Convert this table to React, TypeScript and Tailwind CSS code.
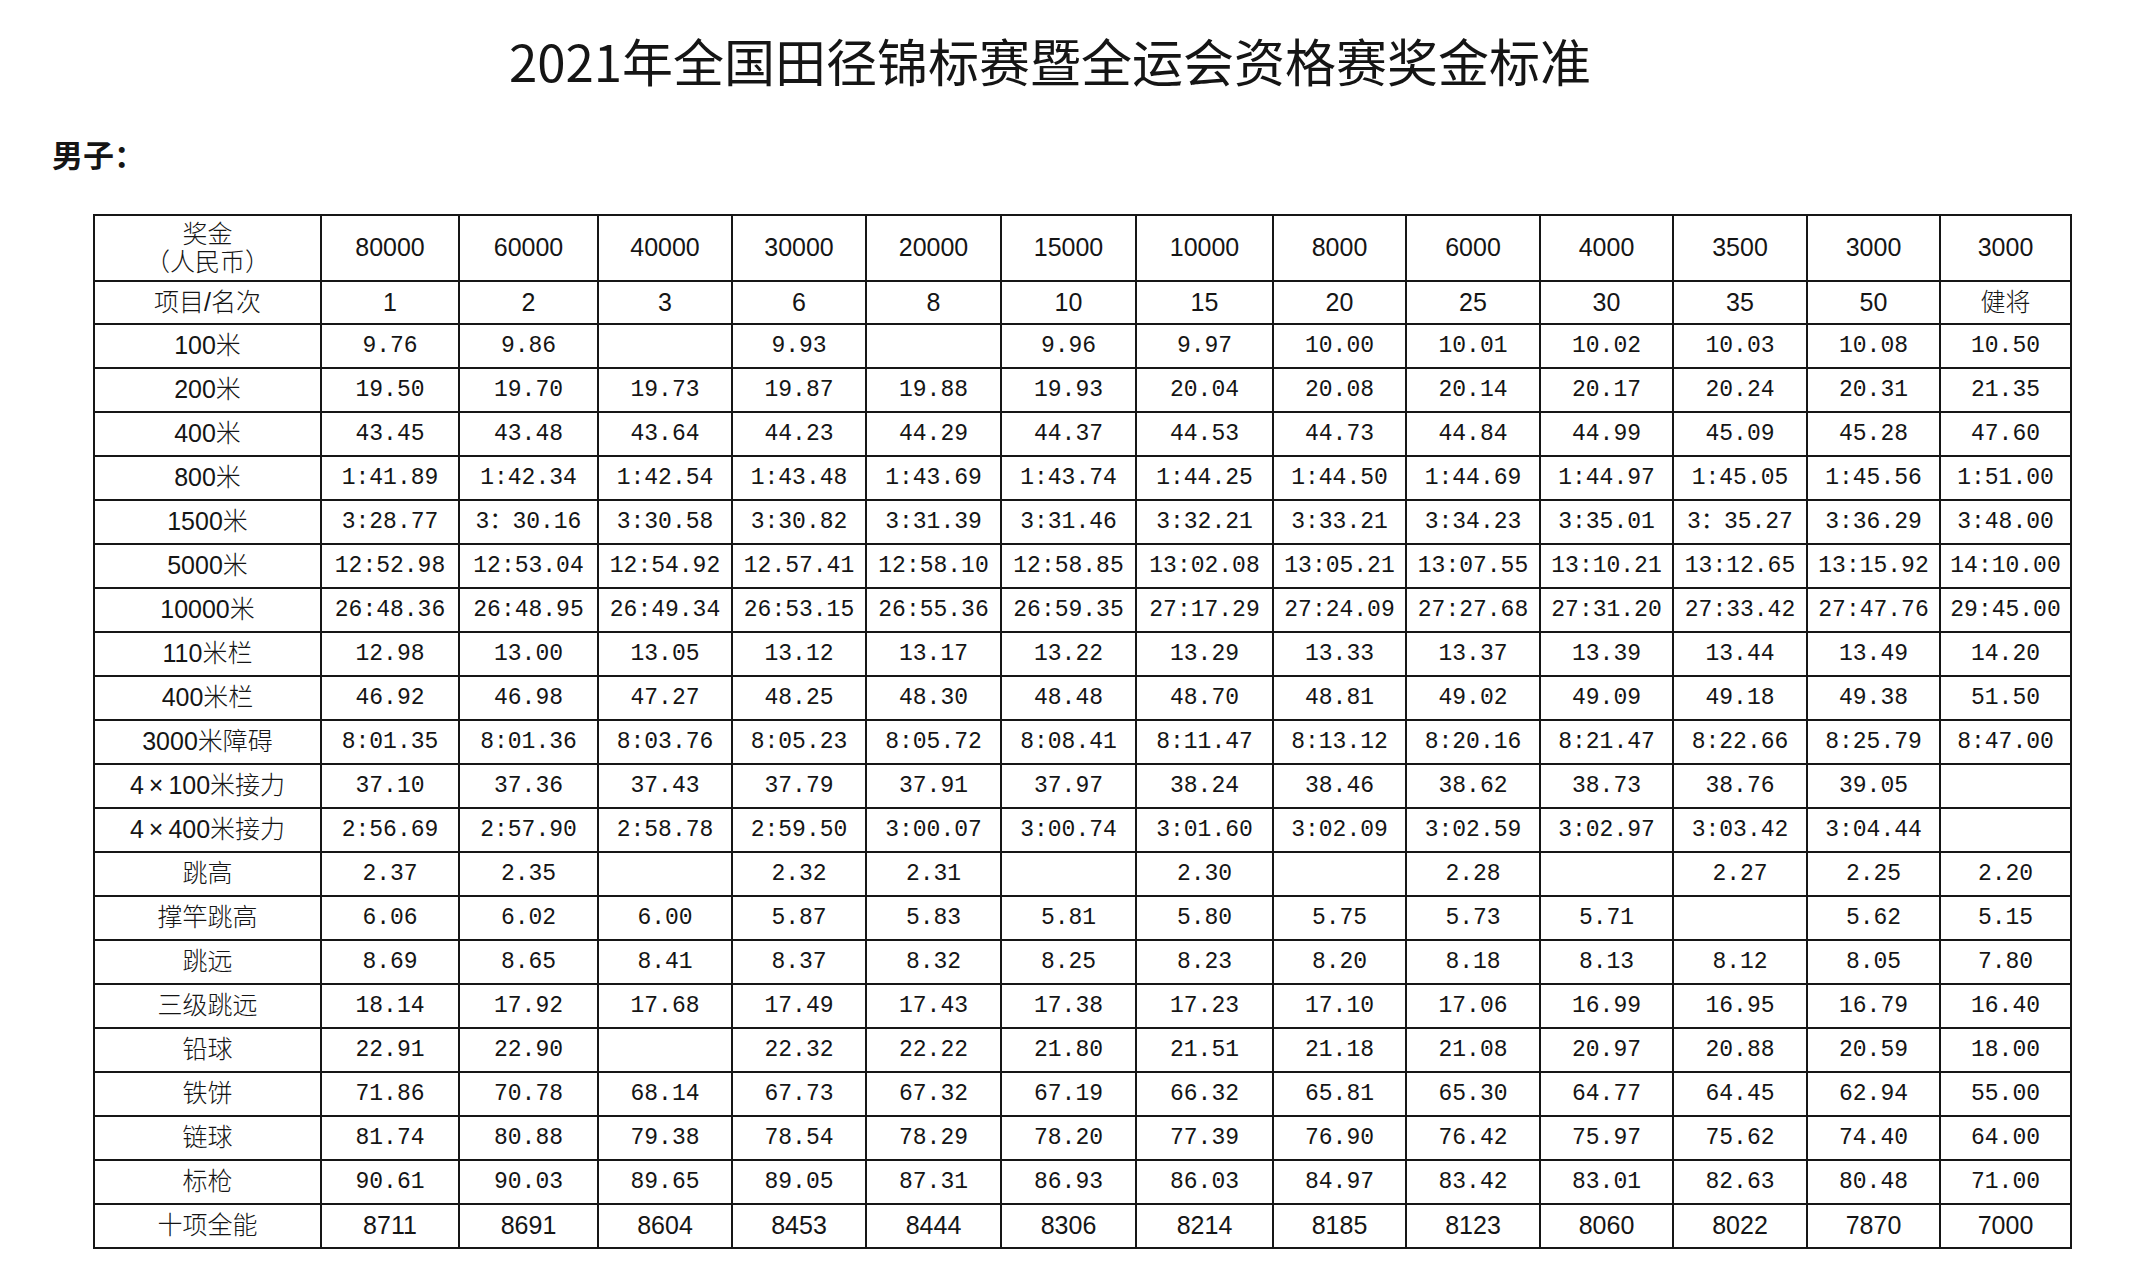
import { FC } from "react";

const prizes = [
  "80000", "60000", "40000", "30000", "20000", "15000", "10000",
  "8000", "6000", "4000", "3500", "3000", "3000",
];

// 原表列宽不完全一致
const colWidths = [
  "w-[227px]", "w-[138px]", "w-[139px]", "w-[134px]", "w-[134px]", "w-[135px]", "w-[135px]",
  "w-[137px]", "w-[133px]", "w-[134px]", "w-[133px]", "w-[134px]", "w-[133px]", "w-[131px]",
];

const ranks = ["1", "2", "3", "6", "8", "10", "15", "20", "25", "30", "35", "50", "健将"];

const rows: [string, string[]][] = [
  ["100米", ["9.76", "9.86", "", "9.93", "", "9.96", "9.97", "10.00", "10.01", "10.02", "10.03", "10.08", "10.50"]],
  ["200米", ["19.50", "19.70", "19.73", "19.87", "19.88", "19.93", "20.04", "20.08", "20.14", "20.17", "20.24", "20.31", "21.35"]],
  ["400米", ["43.45", "43.48", "43.64", "44.23", "44.29", "44.37", "44.53", "44.73", "44.84", "44.99", "45.09", "45.28", "47.60"]],
  ["800米", ["1:41.89", "1:42.34", "1:42.54", "1:43.48", "1:43.69", "1:43.74", "1:44.25", "1:44.50", "1:44.69", "1:44.97", "1:45.05", "1:45.56", "1:51.00"]],
  ["1500米", ["3:28.77", "3：30.16", "3:30.58", "3:30.82", "3:31.39", "3:31.46", "3:32.21", "3:33.21", "3:34.23", "3:35.01", "3：35.27", "3:36.29", "3:48.00"]],
  ["5000米", ["12:52.98", "12:53.04", "12:54.92", "12.57.41", "12:58.10", "12:58.85", "13:02.08", "13:05.21", "13:07.55", "13:10.21", "13:12.65", "13:15.92", "14:10.00"]],
  ["10000米", ["26:48.36", "26:48.95", "26:49.34", "26:53.15", "26:55.36", "26:59.35", "27:17.29", "27:24.09", "27:27.68", "27:31.20", "27:33.42", "27:47.76", "29:45.00"]],
  ["110米栏", ["12.98", "13.00", "13.05", "13.12", "13.17", "13.22", "13.29", "13.33", "13.37", "13.39", "13.44", "13.49", "14.20"]],
  ["400米栏", ["46.92", "46.98", "47.27", "48.25", "48.30", "48.48", "48.70", "48.81", "49.02", "49.09", "49.18", "49.38", "51.50"]],
  ["3000米障碍", ["8:01.35", "8:01.36", "8:03.76", "8:05.23", "8:05.72", "8:08.41", "8:11.47", "8:13.12", "8:20.16", "8:21.47", "8:22.66", "8:25.79", "8:47.00"]],
  ["4×100米接力", ["37.10", "37.36", "37.43", "37.79", "37.91", "37.97", "38.24", "38.46", "38.62", "38.73", "38.76", "39.05", ""]],
  ["4×400米接力", ["2:56.69", "2:57.90", "2:58.78", "2:59.50", "3:00.07", "3:00.74", "3:01.60", "3:02.09", "3:02.59", "3:02.97", "3:03.42", "3:04.44", ""]],
  ["跳高", ["2.37", "2.35", "", "2.32", "2.31", "", "2.30", "", "2.28", "", "2.27", "2.25", "2.20"]],
  ["撑竿跳高", ["6.06", "6.02", "6.00", "5.87", "5.83", "5.81", "5.80", "5.75", "5.73", "5.71", "", "5.62", "5.15"]],
  ["跳远", ["8.69", "8.65", "8.41", "8.37", "8.32", "8.25", "8.23", "8.20", "8.18", "8.13", "8.12", "8.05", "7.80"]],
  ["三级跳远", ["18.14", "17.92", "17.68", "17.49", "17.43", "17.38", "17.23", "17.10", "17.06", "16.99", "16.95", "16.79", "16.40"]],
  ["铅球", ["22.91", "22.90", "", "22.32", "22.22", "21.80", "21.51", "21.18", "21.08", "20.97", "20.88", "20.59", "18.00"]],
  ["铁饼", ["71.86", "70.78", "68.14", "67.73", "67.32", "67.19", "66.32", "65.81", "65.30", "64.77", "64.45", "62.94", "55.00"]],
  ["链球", ["81.74", "80.88", "79.38", "78.54", "78.29", "78.20", "77.39", "76.90", "76.42", "75.97", "75.62", "74.40", "64.00"]],
  ["标枪", ["90.61", "90.03", "89.65", "89.05", "87.31", "86.93", "86.03", "84.97", "83.42", "83.01", "82.63", "80.48", "71.00"]],
];

const decathlon = ["8711", "8691", "8604", "8453", "8444", "8306", "8214", "8185", "8123", "8060", "8022", "7870", "7000"];

// 宋体的替代：等宽数字 + 思源黑体
const mono = "font-['Liberation_Mono','Noto_Sans_CJK_SC',monospace] text-[23px]";
const sans = "font-['Liberation_Sans','Noto_Sans_CJK_SC',sans-serif] text-[25px]";
const label = "font-['Liberation_Sans','Noto_Sans_CJK_SC',sans-serif] text-[25px] font-light";
const cell = "border-2 border-[#161616] p-0 text-center align-middle whitespace-nowrap";

const EventName: FC<{ name: string }> = ({ name }) => {
  const parts = name.split("×");
  if (parts.length === 1) return <>{name}</>;
  return (
    <>
      {parts[0]}
      <span className="mx-[5px]">×</span>
      {parts[1]}
    </>
  );
};

const App: FC = () => {
  return (
    <div className="min-h-[1280px] w-full bg-white text-[#151515]">
      <h1 className="pt-[35px] pr-[36px] text-center font-['Noto_Sans_CJK_SC',sans-serif] text-[51px] font-normal leading-[51px]">
        2021年全国田径锦标赛暨全运会资格赛奖金标准
      </h1>

      <div className="mt-[52px] pl-[52px] font-['Noto_Sans_CJK_SC',sans-serif] text-[31px] font-bold leading-[32px]">
        男子：
      </div>

      <table className="ml-[93px] mt-[44px] w-[1977px] table-fixed border-collapse border-2 border-[#161616]">
        <colgroup>
          {colWidths.map((w, i) => (
            <col key={i} className={w} />
          ))}
        </colgroup>
        <tbody>
          <tr className="h-[66px]">
            <td className={`${cell} ${label} leading-[28px]`}>
              <div>奖金</div>
              <div>（人民币）</div>
            </td>
            {prizes.map((p, i) => (
              <td key={i} className={`${cell} ${sans}`}>
                {p}
              </td>
            ))}
          </tr>
          <tr className="h-[43px]">
            <td className={`${cell} ${label}`}>项目/名次</td>
            {ranks.map((r, i) => (
              <td key={i} className={`${cell} ${r === "健将" ? label : sans}`}>
                {r}
              </td>
            ))}
          </tr>
          {rows.map(([event, marks]) => (
            <tr key={event} className="h-[44px]">
              <td className={`${cell} ${label}`}>
                <EventName name={event} />
              </td>
              {marks.map((m, i) => (
                <td key={i} className={`${cell} ${mono}`}>
                  {m}
                </td>
              ))}
            </tr>
          ))}
          <tr className="h-[44px]">
            <td className={`${cell} ${label}`}>十项全能</td>
            {decathlon.map((d, i) => (
              <td key={i} className={`${cell} ${sans}`}>
                {d}
              </td>
            ))}
          </tr>
        </tbody>
      </table>
    </div>
  );
};

export default App;
